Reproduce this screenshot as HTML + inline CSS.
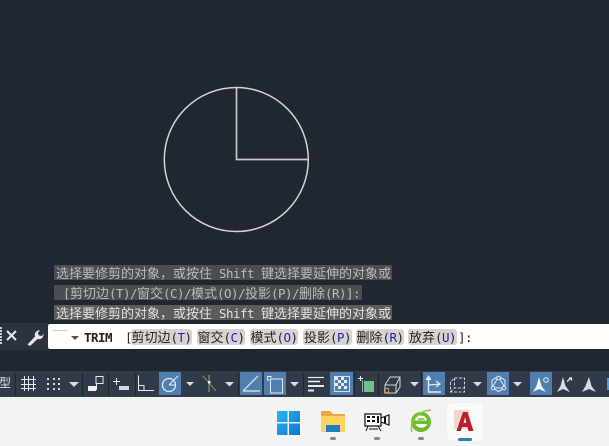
<!DOCTYPE html>
<html><head><meta charset="utf-8"><style>
html,body{margin:0;padding:0;width:609px;height:446px;overflow:hidden;background:#212731}
body{position:relative;font-family:"Noto Sans CJK SC","WenQuanYi Zen Hei",sans-serif}
.a{position:absolute}
.l{position:absolute;font-size:13px;line-height:15px;height:15px;background:#4b4e51;color:#b9bbbd;white-space:pre;left:54px;overflow:hidden;box-sizing:border-box}
.m{font-family:"DejaVu Sans Mono",monospace;font-size:12.5px;letter-spacing:-.53px;font-style:normal;font-weight:normal}
.p{position:absolute;top:329px;height:16px;line-height:16px;background:#d4d4d4;border-radius:3px;color:#222;font-size:13px;white-space:pre;text-align:center;overflow:hidden}
.p b{font-weight:normal;color:#1f1fb4}
.b{position:absolute;top:372px;height:23px;background:#4f7fb0}
.s{position:absolute;top:373px;width:1px;height:24px;background:#1f2630}
</style></head><body>

<svg class="a" style="left:0;top:0" width="609" height="330" fill="none" stroke="#d2d4d7" stroke-width="1.5">
<circle cx="236.300" cy="159.500" r="72"/>
<path d="M236.500 88V159.500H308" stroke="#c4c6c9" stroke-width="1.700"/>
</svg>

<div class="l" style="top:265px;width:338px;padding-left:2px">选择要修剪的对象，或按住<i class="m"> Shift </i>键选择要延伸的对象或</div>
<div class="l" style="top:285px;width:308px;padding-left:9px"><i class="m">[</i>剪切边<i class="m">(T)/</i>窗交<i class="m">(C)/</i>模式<i class="m">(O)/</i>投影<i class="m">(P)/</i>删除<i class="m">(R)]:</i></div>
<div class="l" style="top:305px;width:338px;padding-left:2px;background:#5a5c5e;color:#e2e2e2">选择要修剪的对象，或按住<i class="m"> Shift </i>键选择要延伸的对象或</div>

<!-- command bar -->
<div class="a" style="left:0;top:323px;width:48px;height:27px;background:#2b333e"></div>
<div class="a" style="left:0;top:327px;width:2px;height:18px;background:repeating-linear-gradient(#cfd2d6 0 2px,#2b333e 2px 3px)"></div>
<svg class="a" style="left:0;top:323px" width="48" height="27" fill="none">
<path d="M7 8L16 17M16 8L7 17" stroke="#e6e8ea" stroke-width="2"/>
<path d="M27.500 21.500L35 13.500C34 10 36.500 7 40 7.200L37.800 10L39 12.500L42 13L43.500 10.500C44 14 41.500 17 37.500 16L30 23Z" fill="#e6e6e6"/>
</svg>
<div class="a" style="left:48px;top:324px;width:561px;height:25px;background:#fff;border-radius:2px 0 0 2px"></div>
<div class="a" style="left:53px;top:330px;width:14px;height:1px;background:#c5cbe0"></div>
<svg class="a" style="left:71px;top:336px" width="8" height="4"><path d="M0 0H8L4 4Z" fill="#555"/></svg>
<div class="a m" style="left:84px;top:329px;line-height:17px;color:#222;font-weight:bold">TRIM</div>
<div class="a m" style="left:125px;top:329px;line-height:17px;color:#222">[</div>
<div class="p" style="left:131px;width:61px">剪切边<span class="m">(<b>T</b>)</span></div>
<div class="p" style="left:197px;width:48px">窗交<span class="m">(<b>C</b>)</span></div>
<div class="p" style="left:250px;width:48px">模式<span class="m">(<b>O</b>)</span></div>
<div class="p" style="left:303px;width:49px">投影<span class="m">(<b>P</b>)</span></div>
<div class="p" style="left:356px;width:48px">删除<span class="m">(<b>R</b>)</span></div>
<div class="p" style="left:408px;width:49px">放弃<span class="m">(<b>U</b>)</span></div>
<div class="a m" style="left:458px;top:329px;line-height:17px;color:#222">]:</div>

<!-- status bar -->
<div class="a" style="left:0;top:371px;width:609px;height:26px;background:#303a49"></div>
<div class="a" style="left:0;top:375px;font-size:12px;line-height:16px;color:#dfe2e6;width:12px;overflow:hidden"><span style="margin-left:-1px">型</span></div>
<div class="s" style="left:15px"></div>
<div class="s" style="left:82px"></div>
<div class="s" style="left:108px"></div>
<div class="s" style="left:135px"></div>
<div class="s" style="left:238px"></div>
<div class="s" style="left:303px"></div>
<div class="s" style="left:354px"></div>
<div class="s" style="left:378px"></div>
<div class="s" style="left:421px"></div>
<div class="b" style="left:159px;width:22px"></div>
<div class="b" style="left:240px;width:22px"></div>
<div class="b" style="left:264px;width:22px"></div>
<div class="b" style="left:330px;width:23px"></div>
<div class="b" style="left:423px;width:22px"></div>
<div class="b" style="left:487px;width:22px"></div>
<div class="b" style="left:530px;width:22px"></div>

<svg class="a" style="left:0;top:366px" width="609" height="40" fill="none" stroke="#e8eaed" stroke-width="1">
<!-- grid -->
<path d="M21 13.500H36M21 18.500H36M21 22.500H36M24.500 10V25M28.500 10V25M33.500 10V25"/>
<!-- snap dots -->
<path d="M47 13h2M53 13h2M58 13h2M47 18h2M53 18h2M58 18h2M47 23h2M53 23h2M58 23h2" stroke-width="2" stroke="#d6d9dd"/>
<path d="M69 16H79L74 21Z" fill="#d8dbdf" stroke="none"/>
<!-- infer -->
<rect x="96" y="10.500" width="7" height="7"/>
<path d="M96.500 17V24"/>
<rect x="88" y="20" width="8" height="5" fill="#f0f0f0" stroke="none"/>
<!-- dyn input -->
<path d="M113 15.500H120M116.500 12V19"/>
<rect x="119" y="20" width="10" height="4" fill="#d5d8dc" stroke="none"/>
<!-- ortho -->
<path d="M138.500 9.500V24.500H154M138.500 19.500H144V24.500"/>
<!-- polar -->
<circle cx="169" cy="19" r="6.500" stroke-width="1.300"/>
<path d="M169 19L178 10M169 19H176"/>
<path d="M186 16H194L190 20Z" fill="#d8dbdf" stroke="none"/>
<!-- osnap track -->
<path d="M203 10L216 25" stroke="#c56a6a"/>
<path d="M209 9V26" stroke="#6cc28a"/>
<rect x="208" y="15" width="2.500" height="2.500" fill="#eee" stroke="none"/>
<path d="M225 16H234L229.500 20.500Z" fill="#d8dbdf" stroke="none"/>
<!-- angle -->
<path d="M243 25L258 10M243 25H260" stroke-width="1.200"/>
<!-- osnap box -->
<rect x="267.500" y="10.500" width="3.500" height="3.500"/>
<path d="M272 13H282.500V27H270.500V15"/>
<path d="M290 16H299L294.500 20.500Z" fill="#d8dbdf" stroke="none"/>
<!-- lineweight -->
<path d="M308 11.500H324" stroke-width="1.200"/>
<path d="M308 15.500H320" stroke-width="1.600"/>
<path d="M308 20H324" stroke-width="2"/>
<path d="M308 24.500H314" stroke-width="2"/>
<!-- transparency -->
<rect x="334.500" y="10.500" width="15" height="15" stroke="#cfe0ee"/>
<path d="M335 11h3v3h-3zM341 11h3v3h-3zM338 14h3v3h-3zM344 14h3v3h-3zM335 17h3v3h-3zM341 17h3v3h-3zM338 20h3v3h-3zM344 20h3v3h-3z" fill="#eee" stroke="none"/>
<!-- selection cycling -->
<path d="M358 12.500H363M360.500 10V15"/>
<path d="M362.500 14V26" stroke="#9ab"/>
<rect x="364" y="15" width="10" height="11" fill="#6cc28a" stroke="none"/>
<!-- 3d box -->
<path d="M385 19L390 11H400V21L396 27H385ZM385 19H396V27M396 19L400 11" stroke="#d3d6da"/>
<rect x="384.500" y="22.500" width="4" height="4" stroke="#d4926a"/>
<path d="M410 16H419L414.500 20.500Z" fill="#d8dbdf" stroke="none"/>
<!-- axes -->
<path d="M428.500 11V26H441" stroke-width="1.400"/>
<path d="M426 14L428.500 10L431 14" fill="#eee"/>
<path d="M429 19L440 18M436 15L440 18L436 21" stroke-width="1.200"/>
<!-- dashed box -->
<path d="M450.500 16V26H464.500V12H454.500L450.500 16ZM454.500 12V22H464.500M450.500 26L454.500 22" stroke="#ccd3da" stroke-dasharray="3 1.500"/>
<path d="M473 16H482L477.500 20.500Z" fill="#d8dbdf" stroke="none"/>
<!-- 3d gizmo -->
<path d="M498.500 10.500L505 14V22L498.500 25.500L492 22V14ZM498.500 10.500L492 22H505Z"/>
<circle cx="498.500" cy="12" r="1.800" fill="#4f7fb0"/><circle cx="493" cy="22" r="1.800" fill="#4f7fb0"/><circle cx="504" cy="22" r="1.800" fill="#4f7fb0"/>
<path d="M513 16H522L517.500 20.500Z" fill="#d8dbdf" stroke="none"/>
<!-- annotation -->
<path d="M539 11L541.500 20L546 26L539 23L533 26L536.500 20Z" fill="#f2f2f2" stroke="none"/>
<circle cx="546" cy="14" r="2.300"/>
<path d="M563 11L565.500 20L570 26L563 23L557 26L560.500 20Z" fill="#d8dbdf" stroke="none"/>
<path d="M567 15.500L571 12M569 12H571.500V14.500" stroke-width="1.200"/>
<path d="M589 11L591.500 20L596 26L589 23L582 26L585.500 20Z" fill="#d8dbdf" stroke="none"/>
<path d="M608 12V24" stroke="#4b9fe0" stroke-width="2"/>
</svg>

<!-- taskbar -->
<div class="a" style="left:0;top:397px;width:609px;height:49px;background:#f3f3f3"></div>
<div class="a" style="left:447px;top:403px;width:36px;height:38px;background:#fafafa;border-radius:4px;box-shadow:0 0 1px #ddd"></div>
<svg class="a" style="left:0;top:397px;filter:blur(.3px)" width="609" height="49">
<defs><linearGradient id="w" x1="0" y1="0" x2="1" y2="1"><stop offset="0" stop-color="#29b6ee"/><stop offset="1" stop-color="#0a78d0"/></linearGradient></defs>
<path d="M277 14H287.500V25H277ZM289 14H300V25H289ZM277 26.500H287.500V38H277ZM289 26.500H300V38H289Z" fill="url(#w)"/>
<!-- folder -->
<path d="M321 15C321 14 322 14 323 14H330L333 17H344C345 17 345 18 345 19V35H321Z" fill="#e9a93a"/>
<path d="M321 19H345V35H321Z" fill="#fbd35f"/>
<path d="M326 28H340V35H326Z" fill="#1f7dc4"/>
<rect x="330" y="40" width="6" height="3" rx="1.500" fill="#888"/>
<!-- video -->
<path d="M365 17H381V29H365ZM381 21L389 18V28L381 25Z" fill="#fff" stroke="#111" stroke-width="1.200"/>
<path d="M367 19h3v2h-3zM372 19h3v2h-3zM367 23h3v2h-3zM372 23h3v2h-3zM377 19h2v7h-2zM384 20h2v6h-2z" fill="#111"/>
<path d="M368 29L366 34M378 29L381 34M369 32H378" stroke="#111" stroke-width="1" fill="none"/>
<rect x="374" y="40" width="6" height="3" rx="1.500" fill="#888"/>
<!-- e -->
<circle cx="421" cy="25" r="10" fill="#6dbb2c"/>
<path d="M415 23.500H427C426.500 20 424 18.500 421 18.500C418 18.500 415.500 20 415 23.500Z" fill="#fff"/>
<path d="M415.500 27H427C425.500 32 417 32 415.500 27Z" fill="#fff"/>
<path d="M418 22H424.500" stroke="#6dbb2c" stroke-width="1.500"/>
<path d="M412 35C409 25 418 14 431 13" stroke="#8cc850" stroke-width="1.500" fill="none"/>
<rect x="418" y="40" width="6" height="3" rx="1.500" fill="#888"/>
<!-- A -->
<rect x="454" y="13" width="15" height="19" fill="#f3d4d4"/>
<path d="M463 15H467.500L473.500 34H468.500L467.500 30H462L460.800 34H456.500Z" fill="#b8202a"/>
<path d="M463.500 26H466.500L465 20Z" fill="#f3d4d4"/>
<rect x="458" y="41" width="14" height="3" rx="1.500" fill="#1e8a9a"/>
</svg>
</body></html>
